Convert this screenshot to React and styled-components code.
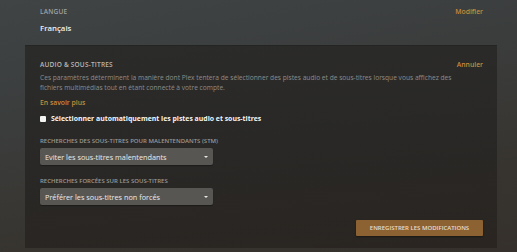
import React from "react";
import styled, { createGlobalStyle } from "styled-components";

const Global = createGlobalStyle`
  html, body { margin: 0; padding: 0; background: #3a3a39; }
  body { font-family: "Open Sans", "Noto Sans", sans-serif; }
  * { box-sizing: border-box; }
`;

const Page = styled.div`
  width: 517px;
  height: 252px;
  overflow: hidden;
  background: linear-gradient(170deg, #404445 0%, #3b3d3d 35%, #37342f 75%, #35302b 100%);
  display: flex;
  flex-direction: column;
`;

const TopSection = styled.div`
  height: 45px;
  padding: 7px 34px 0 40px;
`;

const HeaderRow = styled.div`
  display: flex;
  justify-content: space-between;
  align-items: center;
  height: 8px;
`;

const SectionLabel = styled.div`
  font-size: 6.5px;
  font-weight: 600;
  letter-spacing: 0.2px;
  text-transform: uppercase;
  color: ${p => p.$light ? "#b9b7b3" : "#9fa1a1"};
`;

const ActionLink = styled.a`
  font-size: 6.8px;
  font-weight: 600;
  color: #c98a3c;
  text-decoration: none;
  cursor: pointer;
`;

const Value = styled.div`
  margin-top: 8px;
  font-size: 7.8px;
  font-weight: 600;
  color: #f0f0ee;
`;

const Panel = styled.div`
  margin: 0 20px 0 25px;
  height: 203px;
  padding: 14px 14px 0 15px;
  background: linear-gradient(175deg, #2b2b2a 0%, #292826 50%, #2a2521 100%);
  border-top: 1px solid #242423;
  display: flex;
  flex-direction: column;
`;

const Description = styled.p`
  margin: 5px 0 0;
  font-size: 6.65px;
  line-height: 10px;
  color: #8e8c88;
  max-width: 420px;
`;

const LearnMore = styled(ActionLink)`
  margin-top: 5px;
  display: block;
`;

const CheckRow = styled.label`
  display: flex;
  align-items: center;
  gap: 5px;
  margin-top: 7px;
  font-size: 6.9px;
  font-weight: 700;
  color: #f4f4f2;
`;

const Box = styled.span`
  width: 6px;
  height: 6px;
  background: #f4f4f4;
  border-radius: 1px;
  flex: none;
`;

const Field = styled.div`
  margin-top: ${p => p.$mt}px;
  display: flex;
  flex-direction: column;
  gap: 3px;
`;

const FieldLabel = styled.div`
  font-size: 6px;
  font-weight: 600;
  text-transform: uppercase;
  color: #9c9995;
`;

const Select = styled.div`
  width: 173px;
  height: 17px;
  background: #585653;
  border-radius: 2px;
  display: flex;
  align-items: center;
  justify-content: space-between;
  padding: 0 5px 0 5px;
  font-size: 7.3px;
  font-weight: 500;
  color: #ecebea;
  box-shadow: 0 1px 1px rgba(0,0,0,0.3);
`;

const Caret = styled.span`
  width: 0;
  height: 0;
  border-left: 2px solid transparent;
  border-right: 2px solid transparent;
  border-top: 2.5px solid #e8e8e8;
`;

const Footer = styled.div`
  margin-top: auto;
  margin-bottom: 12px;
  display: flex;
  justify-content: flex-end;
`;

const SaveButton = styled.button`
  width: 127px;
  height: 16px;
  border: none;
  border-radius: 1px;
  background: #8d6232;
  color: #e9dccb;
  font-family: inherit;
  font-size: 6px;
  font-weight: 600;
  text-transform: uppercase;
  padding: 0;
  box-shadow: 0 1px 2px rgba(0,0,0,0.4);
`;

export default function App() {
  return (
    <>
      <Global />
      <Page>
        <TopSection>
          <HeaderRow>
            <SectionLabel>Langue</SectionLabel>
            <ActionLink>Modifier</ActionLink>
          </HeaderRow>
          <Value>Français</Value>
        </TopSection>
        <Panel>
          <HeaderRow>
            <SectionLabel $light>Audio &amp; sous-titres</SectionLabel>
            <ActionLink>Annuler</ActionLink>
          </HeaderRow>
          <Description>
            Ces paramètres déterminent la manière dont Plex tentera de sélectionner des pistes audio et de sous-titres lorsque vous affichez des fichiers multimédias tout en étant connecté à votre compte.
          </Description>
          <LearnMore>En savoir plus</LearnMore>
          <CheckRow>
            <Box />
            Sélectionner automatiquement les pistes audio et sous-titres
          </CheckRow>
          <Field $mt={14}>
            <FieldLabel>Recherches des sous-titres pour malentendants (STM)</FieldLabel>
            <Select>
              Eviter les sous-titres malentendants
              <Caret />
            </Select>
          </Field>
          <Field $mt={12}>
            <FieldLabel>Recherches forcées sur les sous-titres</FieldLabel>
            <Select>
              Préférer les sous-titres non forcés
              <Caret />
            </Select>
          </Field>
          <Footer>
            <SaveButton>Enregistrer les modifications</SaveButton>
          </Footer>
        </Panel>
      </Page>
    </>
  );
}
